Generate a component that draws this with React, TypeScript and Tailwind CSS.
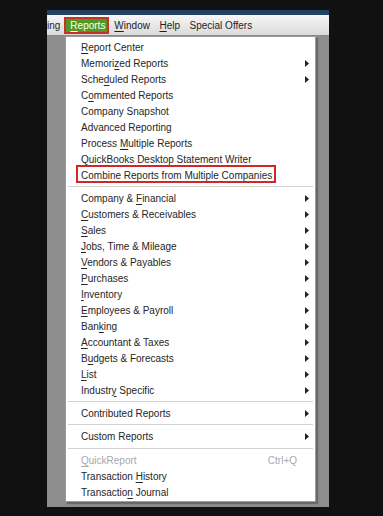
import React from "react";

type Item =
  | { kind: "item"; label: string; arrow?: boolean; disabled?: boolean; shortcut?: string; boxed?: boolean }
  | { kind: "sep"; tall?: boolean };

const items: Item[] = [
  { kind: "item", label: "&Report Center" },
  { kind: "item", label: "Memori&zed Reports", arrow: true },
  { kind: "item", label: "Sche&duled Reports", arrow: true },
  { kind: "item", label: "C&ommented Reports" },
  { kind: "item", label: "Company Snapshot" },
  { kind: "item", label: "Advanced Reporting" },
  { kind: "item", label: "Process &Multiple Reports" },
  { kind: "item", label: "QuickBooks Desktop Statement &Writer" },
  { kind: "item", label: "Com&bine Reports from Multiple Companies", boxed: true },
  { kind: "sep" },
  { kind: "item", label: "Company & &Financial", arrow: true },
  { kind: "item", label: "&Customers & Receivables", arrow: true },
  { kind: "item", label: "&Sales", arrow: true },
  { kind: "item", label: "&Jobs, Time & Mileage", arrow: true },
  { kind: "item", label: "&Vendors & Payables", arrow: true },
  { kind: "item", label: "&Purchases", arrow: true },
  { kind: "item", label: "&Inventory", arrow: true },
  { kind: "item", label: "&Employees & Payroll", arrow: true },
  { kind: "item", label: "Ban&king", arrow: true },
  { kind: "item", label: "&Accountant & Taxes", arrow: true },
  { kind: "item", label: "B&udgets & Forecasts", arrow: true },
  { kind: "item", label: "&List", arrow: true },
  { kind: "item", label: "Industr&y Specific", arrow: true },
  { kind: "sep" },
  { kind: "item", label: "Contributed Reports", arrow: true },
  { kind: "sep" },
  { kind: "item", label: "Custom Reports", arrow: true },
  { kind: "sep", tall: true },
  { kind: "item", label: "&QuickReport", disabled: true, shortcut: "Ctrl+Q" },
  { kind: "item", label: "Transaction &History" },
  { kind: "item", label: "Transactio&n Journal" },
];

// "&X" marks access key X; "& " is a literal ampersand followed by space
function Label({ text }: { text: string }) {
  const out: React.ReactNode[] = [];
  let buf = "";
  for (let i = 0; i < text.length; i++) {
    const c = text[i];
    if (c === "&" && i + 1 < text.length && text[i + 1] !== " ") {
      if (buf) out.push(buf);
      buf = "";
      out.push(
        <span key={i} className="underline underline-offset-[2px] decoration-[1px]">
          {text[i + 1]}
        </span>
      );
      i++;
    } else {
      buf += c;
    }
  }
  if (buf) out.push(buf);
  return <>{out}</>;
}

function Arrow() {
  return (
    <svg width="4" height="7" viewBox="0 0 4 7" className="block">
      <path d="M0 0 L4 3.5 L0 7 Z" fill="#222" />
    </svg>
  );
}

export default function App() {
  return (
    <div
      className="w-[383px] h-[516px] bg-[#111111] pt-[10px] pl-[47px] overflow-hidden"
      style={{ fontFamily: "'Liberation Sans', Arial, sans-serif" }}
    >
      <div className="w-[282px] h-[497px] flex flex-col">
        <div className="h-[5px] bg-[#22415f]" />
        <div className="h-[21px] bg-gradient-to-b from-[#f7f7f7] to-[#dadada] border-b border-[#8a8a8a] flex items-start text-[10px] text-[#1e1e1e] leading-none">
          <span className="mt-[6px]">ing</span>
          <span className="ml-[4px] mt-[2px] w-[45px] h-[17px] border-2 border-[#c8302a] bg-[#4f9a22] text-white pl-[4px] flex items-center">
            <Label text="&Reports" />
          </span>
          <span className="ml-[5px] mt-[6px]">
            <Label text="&Window" />
          </span>
          <span className="ml-[9.5px] mt-[6px]">
            <Label text="&Help" />
          </span>
          <span className="ml-[9.5px] mt-[6px]">Special Offers</span>
        </div>
        <div className="flex-1 bg-[#8d8d8d] pl-[18px]">
          <div className="w-[251px] h-[466px] bg-white border border-[#9a9a9a] shadow-[2px_2px_1px_rgba(0,0,0,0.25)] pt-[2px] text-[10px] text-[#262626]">
            {items.map((it, idx) =>
              it.kind === "sep" ? (
                <div key={idx} className={`${it.tall ? "h-[8px]" : "h-[7px]"} flex items-center px-[2px]`}>
                  <div className="h-px w-full bg-[#d4d4d4]" />
                </div>
              ) : (
                <div key={idx} className="h-[16px] flex items-center pl-[15px] pr-[6px] relative">
                  {it.boxed && (
                    <div className="absolute left-[10px] top-[-2px] w-[200px] h-[18px] border-2 border-[#d02828]" />
                  )}
                  <span className={it.disabled ? "text-[#a8a8a8]" : ""}>
                    <Label text={it.label} />
                  </span>
                  <span className="flex-1" />
                  {it.shortcut && <span className="text-[#a8a8a8] mr-[12px]">{it.shortcut}</span>}
                  {it.arrow && <Arrow />}
                </div>
              )
            )}
          </div>
        </div>
      </div>
    </div>
  );
}
